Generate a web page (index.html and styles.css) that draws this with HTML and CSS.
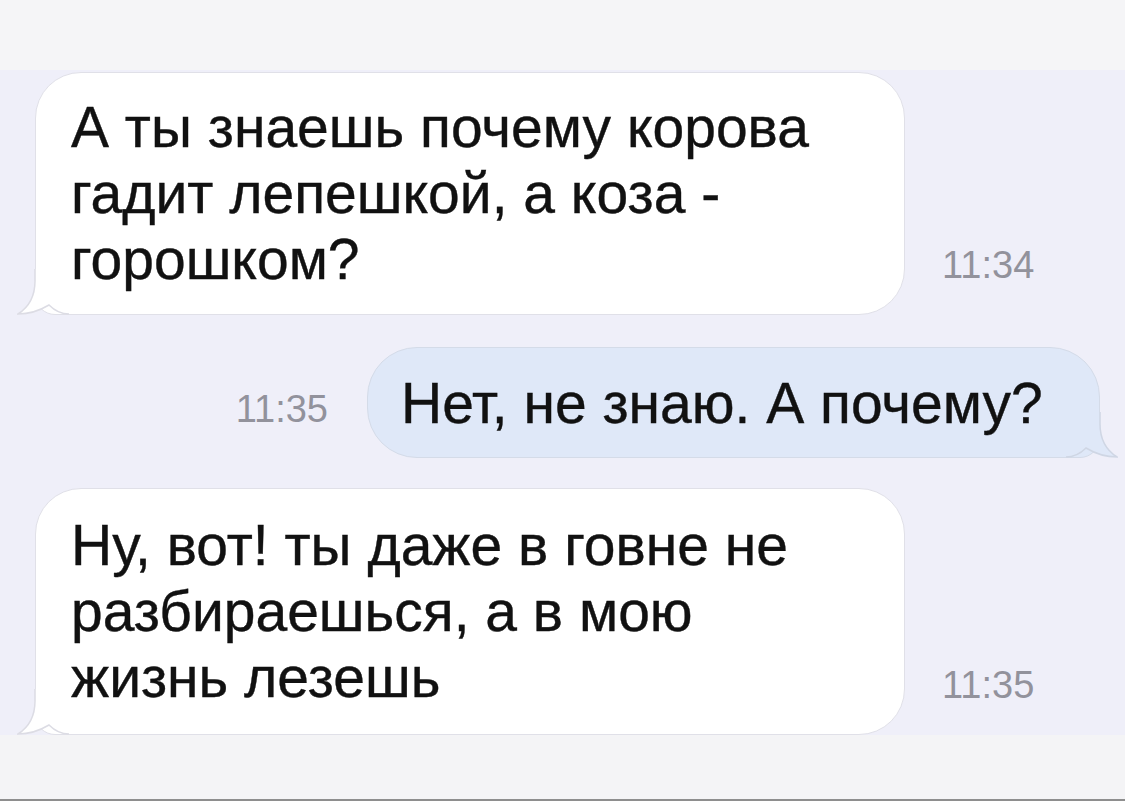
FILE: index.html
```html
<!DOCTYPE html>
<html lang="ru">
<head>
    <meta charset="UTF-8">
    <title>Сообщения</title>
    <link rel="stylesheet" href="styles.css">
</head>
<body>
    <div class="screen">
        <div class="top-band"></div>
        <div class="chat">
            <div class="row incoming">
                <div class="bubble in first">
                    <span class="text">А ты знаешь почему корова<br>гадит лепешкой, а коза -<br>горошком?</span>
                    <svg class="tail tail-left" width="52" height="46" viewBox="0 0 52 46">
                        <path d="M18 0 L18 12 C18 28 12 38 1 45 C12 45 22 42 32 36 C38 42 44 45 52 45 L52 0 Z" fill="#fff"/>
                        <path d="M18 0 L18 12 C18 28 12 38 1 45 C12 45 22 42 32 36 C38 42 44 45 52 45" fill="none" stroke="#dcdce4" stroke-width="1.5"/>
                    </svg>
                </div>
                <div class="time">11:34</div>
            </div>

            <div class="row outgoing">
                <div class="time">11:35</div>
                <div class="bubble out">
                    <span class="text">Нет, не знаю. А почему?</span>
                    <svg class="tail tail-right" width="52" height="46" viewBox="0 0 52 46">
                        <path d="M34 0 L34 12 C34 28 40 38 51 45 C40 45 30 42 20 36 C14 42 8 45 0 45 L0 0 Z" fill="#dfe8f8"/>
                        <path d="M34 0 L34 12 C34 28 40 38 51 45 C40 45 30 42 20 36 C14 42 8 45 0 45" fill="none" stroke="#cfd6e4" stroke-width="1.5"/>
                    </svg>
                </div>
            </div>

            <div class="row incoming">
                <div class="bubble in last">
                    <span class="text">Ну, вот! ты даже в говне не<br>разбираешься, а в мою<br>жизнь лезешь</span>
                    <svg class="tail tail-left" width="52" height="46" viewBox="0 0 52 46">
                        <path d="M18 0 L18 12 C18 28 12 38 1 45 C12 45 22 42 32 36 C38 42 44 45 52 45 L52 0 Z" fill="#fff"/>
                        <path d="M18 0 L18 12 C18 28 12 38 1 45 C12 45 22 42 32 36 C38 42 44 45 52 45" fill="none" stroke="#dcdce4" stroke-width="1.5"/>
                    </svg>
                </div>
                <div class="time">11:35</div>
            </div>
        </div>
        <div class="bottom-band"></div>
    </div>
</body>
</html>
```

FILE: styles.css
```css
body {
    margin: 0;
    background: #fff;
    font-family: "Liberation Sans", Arial, sans-serif;
    color: #111;
}
.screen {
    width: 1125px;
    height: 809px;
    overflow: hidden;
}
.top-band {
    height: 70px;
    background: #f5f5f7;
}
.chat {
    background: #efeff9;
    padding-top: 2px;
}
.row {
    display: flex;
    align-items: flex-end;
}
.row.incoming {
    padding-left: 35px;
}
.row.outgoing {
    justify-content: flex-end;
    padding-right: 25px;
    margin-top: 32px;
    margin-bottom: 30px;
}
.bubble {
    position: relative;
    box-sizing: border-box;
    font-size: 57px;
    line-height: 66px;
    border: 1px solid #e0e0e8;
    white-space: nowrap;
}
.bubble .text {
    position: relative;
    z-index: 1;
    -webkit-text-stroke: 0.4px #111;
}
.bubble.in {
    width: 870px;
    background: #fff;
    border-radius: 46px 46px 46px 20px;
    padding: 21px 0 0 35px;
}
.bubble.first {
    height: 243px;
}
.bubble.last {
    height: 247px;
    padding-top: 23px;
}
.bubble.out {
    width: 733px;
    height: 111px;
    background: #dfe8f8;
    border-color: #d4dbe8;
    border-radius: 50px 50px 20px 50px;
    padding: 22px 0 0 33px;
}
.tail {
    position: absolute;
    bottom: -1px;
}
.tail-left {
    left: -19px;
}
.tail-right {
    right: -19px;
}
.time {
    color: #92929c;
    font-size: 38px;
    line-height: 44px;
    margin: 0 0 28px 37px;
}
.outgoing .time {
    align-self: center;
    margin: 12px 39px 0 0;
}
.bottom-band {
    height: 64px;
    background: #f4f4f6;
    border-bottom: 2px solid #8e8e8e;
}
```
